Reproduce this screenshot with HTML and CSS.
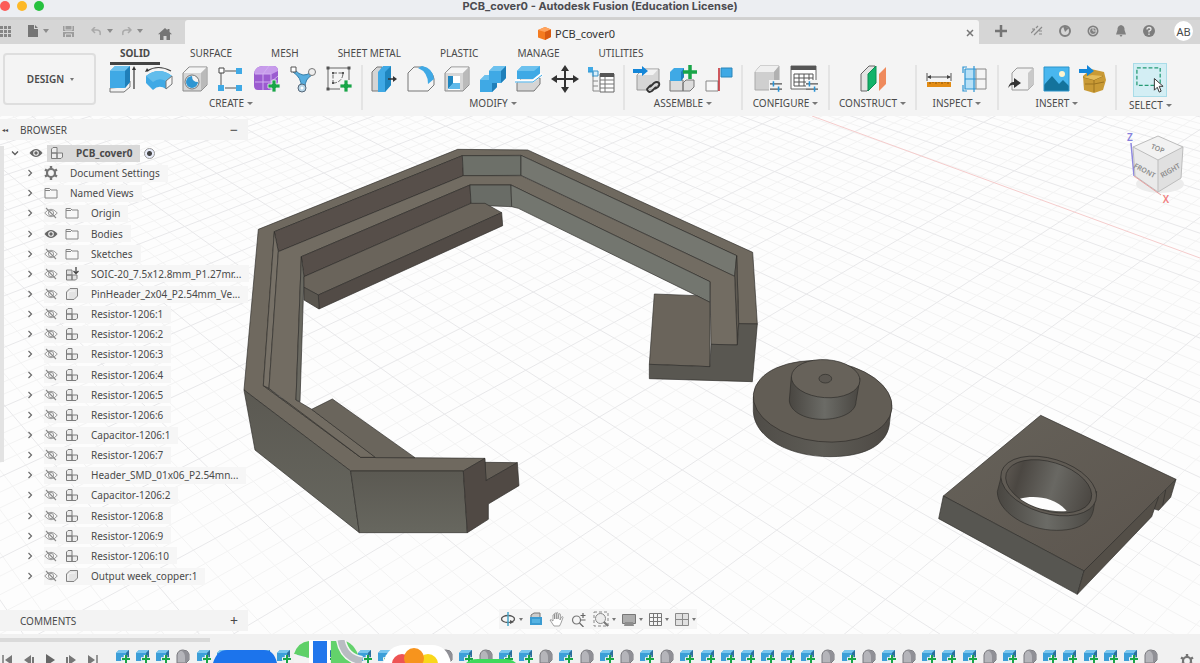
FILE: index.html
```html
<!DOCTYPE html>
<html lang="en">
<head>
<meta charset="utf-8">
<title>PCB_cover0 - Autodesk Fusion (Education License)</title>
<link rel="stylesheet" href="styles.css">
</head>
<body>
<svg class="defs" aria-hidden="true">
  <defs>
    <linearGradient id="greyG" x1="0" y1="0" x2="1" y2="1"><stop offset="0" stop-color="#f4f4f4"/><stop offset="1" stop-color="#c9c9c9"/></linearGradient>
    <symbol id="plus" viewBox="0 0 14 14"><path d="M5 1h4v4h4v4H9v4H5V9H1V5h4z" fill="#19a548" stroke="#f3f3f3" stroke-width=".8"/></symbol>
    <symbol id="cube" viewBox="0 0 28 28"><path d="M2 8l6-6h18v18l-6 6H2z" fill="#d6d6d6" stroke="#8b8b8b"/><path d="M2.500 8l6-5.500h17L20 8z" fill="#f5f5f5"/><path d="M20 8l5.500-5.500V20L20 25.500z" fill="#bababa"/></symbol>
    <symbol id="sliders" viewBox="0 0 14 12"><path d="M0 3h14M0 9h14" stroke="#555" stroke-width="1.500"/><path d="M4 0v6M10 6v6" stroke="#2793d6" stroke-width="1.800"/></symbol>
    <symbol id="chev" viewBox="0 0 8 8"><path d="M2.500 1l3 3-3 3" fill="none" stroke="#6a6a6a" stroke-width="1.200"/></symbol>
    <symbol id="chevdown" viewBox="0 0 8 8"><path d="M1 2.500l3 3 3-3" fill="none" stroke="#5a5a5a" stroke-width="1.300"/></symbol>
    <symbol id="eye" viewBox="0 0 14 12"><path d="M.5 6Q7-2 13.500 6 7 14 .5 6z" fill="#666"/><circle cx="7" cy="6" r="2.800" fill="#f2f2f2"/><circle cx="7" cy="6" r="1.700" fill="#666"/></symbol>
    <symbol id="eyeoff" viewBox="0 0 14 12"><path d="M.7 6Q7-1.500 13.300 6 7 13.500 .7 6z" fill="none" stroke="#9a9a9a"/><circle cx="7" cy="6" r="2.600" fill="none" stroke="#9a9a9a"/><path d="M2 1l10 10" stroke="#8a8a8a" stroke-width="1.100"/></symbol>
    <symbol id="folder" viewBox="0 0 14 12"><path d="M1 11V1.500h4.500L7 3h6v8z" fill="#f7f7f7" stroke="#848484"/><path d="M1 3.500h5" stroke="#848484"/></symbol>
    <symbol id="comp" viewBox="0 0 14 14"><path d="M1.500 7V3L3 1.500h4V7zM1.500 7H7v5.500H1.500zM7 7h5.500v4L11 12.500H7z" fill="#ececec" stroke="#7c7c7c"/></symbol>
    <symbol id="complink" viewBox="0 0 14 14"><path d="M1.500 3H7v5H1.500zM1.500 8H7v5H1.500zM7 8h5v3.500L10.500 13H7z" fill="#e0e0e0" stroke="#7c7c7c"/><path d="M11 0v6M8.500 4L11 6.500 13.500 4" fill="none" stroke="#444" stroke-width="1.300"/></symbol>
    <symbol id="body" viewBox="0 0 14 14"><path d="M1.500 12.500V5L5 1.500h7.500V9L9 12.500z" fill="#e3e3e3" stroke="#848484" stroke-linejoin="round"/><path d="M3 11V6q1-2 4-2h3" fill="none" stroke="#f8f8f8"/></symbol>
    <symbol id="gear" viewBox="0 0 14 14"><circle cx="7" cy="7" r="4" fill="none" stroke="#747474" stroke-width="2.200"/><path d="M7 0v3M7 11v3M1 3.500l2.500 1.500M10.500 9l2.500 1.500M1 10.500L3.500 9M10.500 5L13 3.500" stroke="#747474" stroke-width="2.400"/></symbol>
    <symbol id="tl-extrude" viewBox="0 0 14 14"><path d="M0 4l3-3h10v7l-3 4H0z" fill="#3c9fd8"/><path d="M0 4l3-3h10l-3 3z" fill="#79c5ee"/><path d="M10 4l3-3v7l-3 4z" fill="#2a6f9c"/><path d="M5 10h9M9.500 6v8" stroke="#f3f3f3" stroke-width="3.500"/><path d="M6 10h8M10 6v8" stroke="#19a548" stroke-width="2"/></symbol>
    <symbol id="tl-body" viewBox="0 0 14 14"><path d="M1 14V6q1-5 6-5 5 0 6 4v6l-3 3z" fill="#b5b5ba" stroke="#77777c"/><path d="M9 14V8q0-4-3-6 6-1 7 4v5z" fill="#909096"/></symbol>
  </defs>
</svg>
<div class="app">
  <header class="titlebar">
    <span class="lights"><i class="light red"></i><i class="light amber"></i><i class="light green"></i></span>
    <h1>PCB_cover0 - Autodesk Fusion (Education License)</h1>
  </header>

  <nav class="tabbar">
    <div class="quick">
      <button aria-label="Data panel"><svg width="11" height="11"><path d="M0 0h3v3H0zM4 0h3v3H4zM8 0h3v3H8zM0 4h3v3H0zM4 4h3v3H4zM8 4h3v3H8zM0 8h3v3H0zM4 8h3v3H4zM8 8h3v3H8z" fill="#858585"/></svg></button>
      <button class="q-file" aria-label="File"><svg width="10" height="12"><path d="M0 0h6v4h4v8H0zM7 0l3 3H7z" fill="#757575"/></svg><i class="caret"></i></button>
      <button class="q-save" aria-label="Save"><svg width="11" height="11"><path d="M0 0h11v11H0z" fill="#9d9d9d"/><path d="M2 0v4h7V0M0 5.500h11M2.500 11V8h6v3" fill="none" stroke="#d6d6d6"/></svg></button>
      <button class="q-undo" aria-label="Undo"><svg width="11" height="9"><path d="M4 0L1 3l3 3M1 3h5q4 0 3 5" fill="none" stroke="#a9a9a9" stroke-width="1.500"/></svg><i class="caret"></i></button>
      <button class="q-redo" aria-label="Redo"><svg width="11" height="9"><path d="M7 0l3 3-3 3M10 3H5Q1 3 2 8" fill="none" stroke="#a9a9a9" stroke-width="1.500"/></svg><i class="caret"></i></button>
      <button class="q-home" aria-label="Home"><svg width="14" height="12"><path d="M7 0l2.500 2.200V1h2v3L14 6.300h-2V12H8.500V8h-3v4H2V6.300H0z" fill="#757575"/></svg></button>
    </div>
    <div class="doctab">
      <span class="doc"><svg width="13" height="13"><path d="M0 3l7-3 6 2.500V10l-6 3-7-2.500z" fill="#f47b20"/><path d="M0 3l7-3 6 2.500L7 5z" fill="#ffa45e"/><path d="M7 5l6-2.500V10l-6 3z" fill="#d85b12"/></svg>PCB_cover0</span>
      <button class="close" aria-label="Close tab"><svg width="8" height="8"><path d="M1 1l6 6M7 1L1 7" stroke="#777" stroke-width="1.500"/></svg></button>
    </div>
    <div class="status">
      <button aria-label="New design"><svg width="12" height="12"><path d="M6 0v12M0 6h12" stroke="#757575" stroke-width="2.500"/></svg></button>
      <button aria-label="Extensions"><svg width="12" height="12"><path d="M0 8l4-4M3 10l8-8M5 3l2-2M8 9h3M1 4h3M8 6h3" stroke="#8a8a8a" stroke-width="1.200"/></svg></button>
      <button aria-label="Online status"><svg width="12" height="12"><circle cx="6" cy="6" r="5" fill="none" stroke="#808080" stroke-width="2"/><path d="M4 1l2 6 4-4z" fill="#808080"/></svg></button>
      <button aria-label="Job status"><svg width="12" height="12"><circle cx="6" cy="6" r="5.500" fill="#808080"/><circle cx="6" cy="6" r="3.500" fill="none" stroke="#d6d6d6"/><path d="M6 3v3h3" fill="none" stroke="#d6d6d6"/></svg></button>
      <button aria-label="Notifications"><svg width="12" height="12"><path d="M6 0q4 1 3.500 5L11 9.500H1L2.500 5Q2 1 6 0zM4.500 10h3L6 12z" fill="#808080"/></svg></button>
      <button aria-label="Help"><svg width="12" height="12"><circle cx="6" cy="6" r="6" fill="#7d7d7d"/><path d="M4 4.500q0-2 2-2t2 1.700Q8 5.500 6 6v1.500M6 8.500V10" fill="none" stroke="#e5e5e5" stroke-width="1.300"/></svg></button>
      <button class="avatar">AB</button>
    </div>
  </nav>

  <section class="ribbon">
    <button class="workspace">DESIGN<i class="caret"></i></button>
    <div class="panels">
      <div class="modes">
        <button class="active">SOLID</button><button>SURFACE</button><button>MESH</button><button>SHEET METAL</button><button>PLASTIC</button><button>MANAGE</button><button>UTILITIES</button>
      </div>
      <div class="groups">
        <div class="group">
          <div class="tools">
            <button aria-label="Extrude"><svg viewBox="0 0 28 28"><path d="M1 25V23l14-1 6-6v6l-6 5H1z" fill="#f2f2f2" stroke="#777"/><path d="M1 6l5-5h15v16l-5 6H1z" fill="#3fa9e5"/><path d="M1 6l5-5h15l-5 5z" fill="#6cc1ee"/><path d="M16 6l5-5v16l-5 6z" fill="#1f7fb9"/><path d="M25 24V4" stroke="#444" stroke-width="1.300"/><path d="M25 1l2 4h-4z" fill="#333"/></svg></button>
            <button aria-label="Revolve"><svg viewBox="0 0 28 28"><path d="M2 6Q13-1 26 6" fill="none" stroke="#444" stroke-width="1.200"/><path d="M0 7l2-4 2 3z" fill="#333"/><path d="M1 11Q14 1 27 11v8l-6 5q-7-5-13 1l-7-7z" fill="#3fa9e5"/><path d="M1 11Q14 1 27 11l-6 5q-7-4-13 1z" fill="#62bdec"/><path d="M21 16l6-5v8l-6 5z" fill="#f5f5f5" stroke="#777"/></svg></button>
            <button aria-label="Hole"><svg viewBox="0 0 28 28"><use href="#cube"/><circle cx="11" cy="17" r="7" fill="#f4f4f4" stroke="#777"/><path d="M11 11a6 6 0 1 0 6 6q-6 0-6-6z" fill="#2f96d2"/></svg></button>
            <button aria-label="Rectangular pattern"><svg viewBox="0 0 28 28"><path d="M4 7v13M8 6h12M8 23h12" stroke="#555"/><path d="M2 3h5v5H2z" fill="#fff" stroke="#444"/><path d="M19 3h6v6h-6zM1 20h6v6H1zM19 20h6v6h-6z" fill="#3fa9e5"/></svg></button>
            <button aria-label="Create form"><svg viewBox="0 0 28 28"><path d="M1 8q2-7 9-7h10q5 0 5 5v11q-2 8-9 8H5q-4 0-4-4z" fill="#9b5bd0"/><path d="M1 8q2-7 9-7h10q5 0 5 5l-6 3H2z" fill="#c79beb"/><path d="M2 9h16v16M10 9v16M2 17h16l7-6M10 9l6-8" fill="none" stroke="#d0aef0"/><use href="#plus" x="14" y="14" width="14" height="14"/></svg></button>
            <button aria-label="Automated modeling"><svg viewBox="0 0 28 28"><path d="M6 5q8 9 16 2l1 3q-7 4-7 12h-4Q13 13 4 7z" fill="#58aedf" stroke="#377fa9"/><path d="M2 2h5v5H2z" fill="#fff" stroke="#555"/><circle cx="23" cy="7" r="3.500" fill="#eee" stroke="#777"/><circle cx="13" cy="23" r="4" fill="#b7d6e8" stroke="#567"/><circle cx="13" cy="23" r="1.500" fill="#fff"/></svg></button>
            <button aria-label="Create sketch"><svg viewBox="0 0 28 28"><path d="M3 3h21v12M3 3v21h12" fill="none" stroke="#666"/><path d="M8 19V8h11M18 9q-1 8-9 9" fill="none" stroke="#666" stroke-dasharray="4 1.500"/><path d="M1.500 1.500h3v3h-3zM22.500 1.500h3v3h-3zM1.500 22.500h3v3h-3zM7 7h2v2H7zM17 7h2v2h-2zM7 17h2v2H7z" fill="#555"/><use href="#plus" x="14" y="14" width="14" height="14"/></svg></button>
          </div>
          <button class="group-name">CREATE<i class="caret"></i></button>
        </div>
        <div class="group">
          <div class="tools">
            <button aria-label="Press pull"><svg viewBox="0 0 28 28"><path d="M1 7l5-5h5v24H1z" fill="#d5d5d5" stroke="#777"/><path d="M7 7l5-6h8v19l-6 7H7z" fill="#3fa9e5"/><path d="M14 7l6-6v19l-6 7z" fill="#1f86c0"/><path d="M17 14h6" stroke="#333" stroke-width="1.500"/><path d="M22 11l4 3-4 3z" fill="#333"/></svg></button>
            <button aria-label="Fillet"><svg viewBox="0 0 28 28"><path d="M1 8l6-6h9q10 4 11 12v6l-6 6H1z" fill="url(#greyG)" stroke="#777"/><path d="M11 3l4-2q11 2 12 13l-6 5Q21 7 11 3z" fill="#3fa9e5"/></svg></button>
            <button aria-label="Shell"><svg viewBox="0 0 28 28"><use href="#cube"/><path d="M5 11h12v14H5z" fill="#fff"/><path d="M5 11h5v8l-5 5z" fill="#1f86c0"/><path d="M5 24l5-6h7v6z" fill="#5fb9ea"/></svg></button>
            <button aria-label="Combine"><svg viewBox="0 0 28 28"><path d="M1 15l5-5h4V6l5-5h12v12l-5 5h-4v4l-5 5H1z" fill="#3fa9e5"/><path d="M1 15l5-5h4v5zM10 6l5-5h12l-5 5z" fill="#6cc1ee"/><path d="M22 6l5-5v12l-5 5zM13 18h5v4l-5 5z" fill="#1f7fb9"/></svg></button>
            <button aria-label="Split body"><svg viewBox="0 0 28 28"><path d="M2 18l5-5h18v6l-6 7H2z" fill="#d5d5d5" stroke="#777"/><path d="M2 6l5-5h18v8l-6 5H2z" fill="#3fa9e5"/><path d="M2 6l5-5h18l-6 5z" fill="#6cc1ee"/><path d="M0 16h18l9-7" fill="none" stroke="#fff" stroke-width="3"/><path d="M0 17h18l9-7" fill="none" stroke="#3fa9e5"/></svg></button>
            <button aria-label="Move"><svg viewBox="0 0 28 28"><path d="M14 4v20M4 14h20" stroke="#333" stroke-width="2"/><path d="M14 0l4 6h-8zM14 28l4-6h-8zM0 14l6-4v8zM28 14l-6-4v8z" fill="#333"/></svg></button>
            <button aria-label="Parameters"><svg viewBox="0 0 28 28"><path d="M1 2h5v5H1z" fill="#3fa9e5"/><path d="M6 6h5v5H6zM1 7h5v5" fill="#d8eefa" stroke="#3b94ca"/><path d="M6 11v15h6M6 16h5M6 21h5" fill="none" stroke="#888"/><path d="M13 9h14v18H13z" fill="#fff" stroke="#666"/><path d="M13 8h14v4H13z" fill="#555"/><path d="M13 15h14M13 19h14M13 23h14M18 12v15" stroke="#777"/></svg></button>
          </div>
          <button class="group-name">MODIFY<i class="caret"></i></button>
        </div>
        <div class="group">
          <div class="tools">
            <button aria-label="Insert component"><svg viewBox="0 0 28 28"><path d="M4 10l6-6h16v15l-6 6H4z" fill="#d6d6d6" stroke="#999"/><path d="M4.500 10l6-5.500H25L20 10z" fill="#f2f2f2"/><path d="M0 4h9V1l6 5-6 5V8H0z" fill="#1486d8"/><path d="M17 22l4-4q3-2 5 0 1 2-1 4l-3 2M23 22l-4 4q-3 2-4 0-2-2 0-3l3-3" fill="none" stroke="#333" stroke-width="1.800"/></svg></button>
            <button aria-label="New component"><svg viewBox="0 0 28 28"><path d="M1 15h13v11H1zM14 18l3-3h8v7l-4 4h-7z" fill="#ddd" stroke="#777"/><path d="M1 7l4-4h10v9l-3 4H1z" fill="#3fa9e5"/><path d="M12 7l3-4v9l-3 4z" fill="#1f7fb9"/><path d="M21 0v14M14 7h14" stroke="#19a548" stroke-width="3.500"/></svg></button>
            <button aria-label="Joint"><svg viewBox="0 0 28 28"><path d="M1 16h12v10H1z" fill="#f8f8f8" stroke="#888"/><path d="M16 3h11v9H16z" fill="#3fa9e5" stroke="#2b86ba"/><path d="M14 3v23" stroke="#c2252c" stroke-width="1.500"/></svg></button>
          </div>
          <button class="group-name">ASSEMBLE<i class="caret"></i></button>
        </div>
        <div class="group narrow">
          <div class="tools">
            <button aria-label="Configure"><svg viewBox="0 0 28 28"><path d="M1 7l5-6h19v18l-5 6H1z" fill="#cfcfcf" stroke="#aaa"/><path d="M1 7l5-6h19l-5 6z" fill="#efefef"/><path d="M20 7l5-6v18l-5 6z" fill="#b1b1b1"/><path d="M15 15h13v13H15z" fill="#f3f3f3"/><use href="#sliders" x="16" y="16" width="12" height="11"/></svg></button>
            <button aria-label="Configuration table"><svg viewBox="0 0 28 28"><path d="M1 1h25v23H1z" fill="#fff" stroke="#666"/><path d="M1 1h25v4H1z" fill="#555"/><path d="M4 9h19v12H4zM4 13h19M4 17h19M9 9v12M14 9v12M19 9v12" fill="none" stroke="#555"/><path d="M16 15h12v13H16z" fill="#f3f3f3"/><use href="#sliders" x="16" y="16" width="12" height="11"/></svg></button>
          </div>
          <button class="group-name">CONFIGURE<i class="caret"></i></button>
        </div>
        <div class="group narrow">
          <div class="tools">
            <button aria-label="Offset plane"><svg viewBox="0 0 28 28"><path d="M2 9l8-8h6v17l-8 8H2z" fill="#e4e4e4" stroke="#666"/><path d="M9 9l8-8v17l-8 8z" fill="#12b36a" stroke="#0d8d52"/><path d="M20 9l7-7v17l-7 7z" fill="#ef8a5c"/></svg></button>
          </div>
          <button class="group-name">CONSTRUCT<i class="caret"></i></button>
        </div>
        <div class="group">
          <div class="tools">
            <button aria-label="Measure"><svg viewBox="0 0 28 28"><path d="M2 8v8M26 8v8M3 12h22" stroke="#555"/><path d="M2 12l4-2v4zM26 12l-4-2v4z" fill="#444"/><path d="M2 17h24v5H2z" fill="#e38c14"/><path d="M5 17v2M8 17v1M11 17v2M14 17v1M17 17v2M20 17v1M23 17v2" stroke="#8d560b"/></svg></button>
            <button aria-label="Interference"><svg viewBox="0 0 28 28"><path d="M4 4h11v20H4z" fill="#b7e0f7"/><path d="M15 4h10v20H15zM15 14h10" fill="none" stroke="#888"/><path d="M6 2H2v6M2 20v6h4M13 1v26M4 4h11M4 4v20h11M4 14h11" fill="none" stroke="#2d93d1" stroke-width="1.200"/></svg></button>
          </div>
          <button class="group-name">INSPECT<i class="caret"></i></button>
        </div>
        <div class="group">
          <div class="tools">
            <button aria-label="Derive"><svg viewBox="0 0 28 28"><path d="M5 8l5-5h16v17l-5 5H5z" fill="#f1f1f1" stroke="#999"/><path d="M21 8l5-5v17l-5 5z" fill="#c9c9c9"/><path d="M1 23q2-7 6-6v-4l7 5-7 5v-3q-3-1-6 3z" fill="#333"/></svg></button>
            <button aria-label="Canvas"><svg viewBox="0 0 28 28"><path d="M1 2h25v24H1z" fill="#49b7ef"/><circle cx="19" cy="9" r="3" fill="#fff5cf"/><path d="M1 20l8-9 7 8 4-4 6 6v5H1z" fill="#14739c"/><path d="M1 2h25v24H1z" fill="none" stroke="#2a94cb"/></svg></button>
            <button aria-label="Insert McMaster part"><svg viewBox="0 0 28 28"><path d="M4 11l8-7 13 3 2 8-3 10-9 3-10-3z" fill="#c99a35"/><path d="M4 12l11 3 9-4M15 15v12M6 19h9l10-2" fill="none" stroke="#9d7420"/><path d="M4 12l9-2 11 1-9 4z" fill="#e5bd5b"/><path d="M0 4h8V0l7 6-7 5V8H0z" fill="#1486d8"/></svg></button>
          </div>
          <button class="group-name">INSERT<i class="caret"></i></button>
        </div>
        <div class="group last">
          <div class="tools">
            <button class="selected" aria-label="Select"><svg viewBox="0 0 33 33"><path d="M3 4h24v18H3z" fill="none" stroke="#259a74" stroke-width="1.300" stroke-dasharray="4 2"/><path d="M21 15v12l3-3 2 5 2-1-2-5h4z" fill="#fff" stroke="#333"/></svg></button>
          </div>
          <button class="group-name">SELECT<i class="caret"></i></button>
        </div>
      </div>
    </div>
  </section>

  <main class="viewport">
    <svg class="scene" viewBox="0 116 1200 518" preserveAspectRatio="xMidYMid slice" role="img" aria-label="Model view">
      <defs>
        <linearGradient id="bossG"><stop offset="0" stop-color="#494641"/><stop offset=".5" stop-color="#6b6b66"/><stop offset="1" stop-color="#494641"/></linearGradient>
        <linearGradient id="holeG"><stop offset="0" stop-color="#5a554f"/><stop offset=".15" stop-color="#4b4742"/><stop offset=".55" stop-color="#696863"/><stop offset="1" stop-color="#4b4742"/></linearGradient>
        <linearGradient id="discG"><stop offset="0" stop-color="#4f4c47"/><stop offset=".5" stop-color="#5e5c56"/><stop offset="1" stop-color="#4c4843"/></linearGradient>
        <linearGradient id="wallG" x1="0" y1="0" x2="0" y2="1"><stop offset="0" stop-color="#5b5952"/><stop offset="1" stop-color="#67675f"/></linearGradient>
        <linearGradient id="topG" x1="0" y1="0" x2="1" y2="1"><stop offset="0" stop-color="#66625a"/><stop offset="1" stop-color="#5b544d"/></linearGradient>
      </defs>
      <path id="grid-minor" class="minor"/>
      <path id="grid-major" class="major"/>
      <path d="M812 116L1200 258" stroke="#f5cccc" fill="none"/>
      <g class="solid" transform="translate(230 140) scale(.33333)">
        <path d="M42 750L85 268 683 28 893 30 1568 337 1582 552 1526 551 1520 347 873 46 697 47 133 275 100 737 392 952 765 955 700 993 362 993z" fill="#6f695f"/>
        <path d="M100 737L117 745 150 772 437 952H392z" fill="#6f695f"/>
        <path d="M133 275L697 47 700 107 145 335z" fill="#574f4a"/>
        <path d="M697 47H873V106L700 107z" fill="#6d7069"/>
        <path d="M873 46L1520 347 1514 409 873 106z" fill="#757770"/>
        <path d="M133 275L145 335 117 745 100 737z" fill="#777167"/>
        <path d="M1520 347L1526 551 1522 615 1514 409z" fill="#5f5a52"/>
        <path d="M145 335L700 107H873L1514 409 1522 615 1443 613 1440 425 843 135H720L214 350 198 780 245 808 437 952H392L117 745z" fill="#726c62"/>
        <path d="M214 350L720 135 723 190 222 410z" fill="#564e49"/>
        <path d="M720 135H843L845 200 765 197 723 190z" fill="#696c66"/>
        <path d="M843 135L1440 425V487L1400 467 865 205 845 200z" fill="#73766f"/>
        <path d="M214 350L222 410 210 785 198 780z" fill="#696860"/>
        <path d="M222 410L723 190H765L815 218 265 465 222 442z" fill="#6a645b"/>
        <path d="M265 465L815 218 818 257 267 507z" fill="#524b46"/>
        <path d="M222 442L265 465 267 507 222 480z" fill="#5a564f"/>
        <path d="M245 808L307 777 555 953H437z" fill="#6a655c"/>
        <path d="M42 750L362 993 388 1178 75 930z" fill="url(#wallG)"/>
        <path d="M362 993H700L712 1178H388z" fill="url(#wallG)"/>
        <path d="M765 967L862 968 768 1022z" fill="#645e56"/>
        <path d="M700 993L765 955 768 1022 862 968 867 1037 775 1092V1138L712 1178z" fill="#504944"/>
        <path d="M1273 462L1400 467 1440 487V680L1258 673z" fill="#6a645b"/>
        <path d="M1258 673L1440 680 1443 613 1522 615 1526 551 1582 552 1567 725 1258 716z" fill="#595751"/>
      </g>
      <g class="solid" transform="translate(480 140) scale(.33333)">
        <path d="M820 770V815C824 895 930 950 1050 950S1226 905 1229 845L1235 795z" fill="url(#discG)"/>
        <ellipse cx="1028" cy="784" rx="209" ry="121" transform="rotate(6 1028 784)" fill="#625d55"/>
        <path d="M934 710L928 780C928 812 970 838 1027 838S1128 816 1128 785L1140 715z" fill="url(#bossG)"/>
        <ellipse cx="1037" cy="716" rx="103" ry="57" transform="rotate(4 1037 716)" fill="#67625a"/>
        <ellipse cx="1036" cy="716" rx="19" ry="13" fill="#5b5751"/>
      </g>
      <g class="solid" transform="translate(920 400) scale(.33333)">
        <path d="M362 46L768 238 492 513 70 288z" fill="url(#topG)"/>
        <path d="M70 288L492 513 472 583 56 356z" fill="#575651"/>
        <path d="M492 513L716 290 768 238 752 292 716 331 703 327 695 350 472 583z" fill="#544f48"/>
        <path d="M716 290L703 327M737 270L728 316" fill="none"/>
        <path d="M245 225L232 275C232 335 320 391 410 391S518 350 521 325L530 275z" fill="url(#bossG)"/>
        <ellipse cx="386" cy="258" rx="148" ry="82" transform="rotate(17 386 258)" fill="#605b54"/>
        <ellipse cx="386" cy="259" rx="133" ry="73" transform="rotate(17 386 259)" fill="url(#holeG)"/>
        <path d="M300 296C340 285 405 290 440 333 380 337 330 318 300 296z" fill="#fdfdfd" stroke="none"/>
      </g>
      <g class="viewcube">
        <ellipse cx="1160" cy="184" rx="24" ry="9" fill="#ececec"/>
        <path d="M1131 143L1134 176" stroke="#8d87e0" stroke-width="1.500"/>
        <path d="M1133 147L1158 136 1183 147 1158 160z" fill="#f2f2f2"/>
        <path d="M1133 147L1158 160V192L1135 176z" fill="#eaeaea"/>
        <path d="M1158 160L1183 147 1181 178 1158 192z" fill="#e0e0e0"/>
        <path d="M1133 147L1158 136 1183 147 1181 178 1158 192 1135 176zM1133 147L1158 160 1183 147M1158 160V192" fill="none" stroke="#bdbdbd"/>
        <path d="M1134 176L1161 195" stroke="#e9a0a0"/>
        <text x="1158" y="151" transform="rotate(22 1158 148)">TOP</text>
        <text x="1145" y="173" transform="rotate(28 1145 170)">FRONT</text>
        <text x="1170" y="173" transform="rotate(-30 1170 170)">RIGHT</text>
        <text class="axis" x="1130" y="141">Z</text>
        <text class="axis" x="1166" y="203">X</text>
      </g>
    </svg>

    <aside class="browser">
      <header class="bar"><span class="collapse">◂◂</span><h2>BROWSER</h2><button aria-label="Minimise browser">−</button></header>
      <ul class="tree" id="tree"></ul>
      <footer class="bar"><span class="collapse"></span><h2>COMMENTS</h2><button aria-label="Add comment">+</button></footer>
    </aside>

    <div class="navbar">
      <button aria-label="Orbit"><svg width="16" height="14"><ellipse cx="8" cy="7" rx="6.500" ry="3.500" fill="none" stroke="#555" stroke-width="1.300"/><path d="M8 0v14" stroke="#46a5c9" stroke-width="1.500"/><path d="M10 8l4 2-4 2z" fill="#555"/></svg><i class="caret"></i></button>
      <button aria-label="Look at"><svg width="14" height="14"><path d="M2 6V3l3-2h6v5" fill="#ccc" stroke="#777"/><path d="M1 5h12v8H1z" fill="#3b9bd1"/><path d="M3 7h8v4H3z" fill="#55b2e2"/></svg></button>
      <button aria-label="Pan"><svg width="16" height="15"><path d="M5 14L1 8q1-1 3 1V3q1-1 1.500 0v4V1.500q1-1 1.800 0V7 1q1-1 1.700 0v6l1-5q1-1 1.500.5L11 8l1.500-3q1.500-1 1.500.5L12 11l-1.500 3z" fill="#fff" stroke="#8a8a8a" stroke-width=".8"/></svg></button>
      <button aria-label="Zoom"><svg width="16" height="15"><circle cx="5.500" cy="8" r="4" fill="none" stroke="#777" stroke-width="1.200"/><path d="M8.500 11l4 4M12 1v5M9.500 3.500h5M9.500 8h5" stroke="#666" stroke-width="1.200"/></svg></button>
      <button aria-label="Fit"><svg width="16" height="16"><path d="M1 1h14v14H1z" fill="none" stroke="#888" stroke-dasharray="3 2"/><circle cx="7.500" cy="7.500" r="5" fill="#ececec" stroke="#888"/><path d="M11 11l4 4" stroke="#777" stroke-width="2"/></svg><i class="caret"></i></button>
      <button aria-label="Display settings"><svg width="14" height="13"><path d="M.5 1.500h13v9H.5z" fill="#adadad" stroke="#777"/><path d="M3 9h8l1 4H2z" fill="#8e8e8e"/></svg><i class="caret"></i></button>
      <button aria-label="Grid settings"><svg width="13" height="13"><path d="M.5.5h12v12H.5zM4.500 0v13M8.500 0v13M0 4.500h13M0 8.500h13" fill="none" stroke="#777"/></svg><i class="caret"></i></button>
      <button aria-label="Viewports"><svg width="14" height="13"><path d="M.5.5h13v12H.5zM7.500 0v13M0 6.500h14" fill="#e1e1e1" stroke="#8a8a8a"/></svg><i class="caret"></i></button>
    </div>
  </main>

  <footer class="timeline">
    <div class="scrollbar"></div>
    <div class="track">
      <div class="transport">
        <button aria-label="Go to start"><svg width="12" height="12"><path d="M1 1v10" stroke="#777" stroke-width="1.500"/><path d="M10 1v10L3 6z" fill="#777"/></svg></button>
        <button aria-label="Step back"><svg width="12" height="12"><path d="M8 1v10L1 6zM9 3h2v8H9z" fill="#777"/></svg></button>
        <button aria-label="Play"><svg width="12" height="12"><path d="M2 0v12l9-6z" fill="#666"/></svg></button>
        <button aria-label="Step forward"><svg width="12" height="12"><path d="M4 1v10l7-5zM1 3h2v8H1z" fill="#777"/></svg></button>
        <button aria-label="Go to end"><svg width="12" height="12"><path d="M11 1v10" stroke="#777" stroke-width="1.500"/><path d="M2 1v10l7-5z" fill="#777"/></svg></button>
      </div>
      <div class="features" id="features"></div>
      <button class="settings" aria-label="Timeline settings"><svg width="14" height="14"><use href="#gear"/></svg></button>
    </div>
    <svg class="dock" width="310" height="23" aria-hidden="true">
      <path d="M3 23Q7 10 17 10H54Q64 10 67 23z" fill="#1c74ec"/>
      <path d="M84 14Q88 2 99 1V18z" fill="#5fd068"/><path d="M84 14L99 18V23H84z" fill="#f3f3f3"/>
      <path d="M99 0h21v23H99z" fill="#fff"/><path d="M103 1h14v22H103z" fill="#2277ec"/>
      <path d="M121 1h14Q146 4 151 23H121z" fill="#63d26b"/><path d="M131 0Q134 18 152 21" fill="none" stroke="#f5f5f5" stroke-width="10"/><path d="M131 0Q134 18 152 21" fill="none" stroke="#b9bcc2" stroke-width="7"/>
      <path d="M173 23Q178 5 194 5H222Q237 5 241 23z" fill="#fff"/>
      <circle cx="192" cy="24" r="10" fill="#ee5454"/><circle cx="218" cy="24" r="10" fill="#f9d71c"/><circle cx="204" cy="18" r="10" fill="#f7941d"/>
      <path d="M256 23Q260 19 268 19H294Q302 19 306 23z" fill="#3fd95c"/>
    </svg>
  </footer>
</div>
<script src="app.js"></script>
</body>
</html>
```

FILE: styles.css
```css
* { box-sizing: border-box; }
body {
  margin: 0;
  font-family: "Noto Sans", "Open Sans", sans-serif;
  font-size: 10px;
  color: #4a4a4a;
}
button {
  border: 0;
  padding: 0;
  margin: 0;
  background: none;
  font: inherit;
  color: inherit;
  display: flex;
  align-items: center;
  justify-content: center;
}
h1, h2, ul { margin: 0; padding: 0; font: inherit; }
.defs { display: none; }
svg { display: block; flex: none; }
.caret {
  border: 3px solid transparent;
  border-top: 4px solid #777;
  border-bottom: 0;
  flex: none;
}
.app { height: 100vh; display: flex; flex-direction: column; overflow: hidden; }

.titlebar {
  height: 18px;
  flex: none;
  background: #eceef2;
  border-bottom: 1px solid #d2d2d2;
  display: grid;
  grid-template-columns: 1fr auto 1fr;
  padding-bottom: 6px;
  align-items: center;
}
.titlebar h1 { font: 700 11px/12px Inter, sans-serif; color: #4b4b50; }
.lights { display: flex; gap: 7px; }
.light { width: 10px; height: 10px; border-radius: 50%; }
.red { background: #fc5b57; }
.amber { background: #fdb827; }
.green { background: #27c13f; }

.tabbar { height: 26px; flex: none; display: flex; background: #d6d6d6; border-top: 2px solid #d0d0d0; }
.quick { width: 185px; flex: none; display: flex; align-items: center; padding-bottom: 2px; }
.quick button { gap: 5px; }
.quick .caret { border-top-color: #8c8c8c; }
.q-file { margin-left: 17px; }
.q-save { margin-left: 14px; }
.q-undo { margin-left: 17px; }
.q-redo { margin-left: 8px; }
.q-home { margin-left: 15px; padding-top: 6px; }
.doctab {
  flex: 1;
  background: #f4f4f4;
  border-radius: 3px 3px 0 0;
  display: flex;
  align-items: center;
  padding-right: 5px;
}
.doc { flex: 1; display: flex; gap: 4px; justify-content: center; align-items: center; font-size: 11px; color: #333; padding: 3px 0 0 3px; }
.doctab .close { width: 9px; padding-top: 2px; }
.status { width: 221px; flex: none; display: flex; align-items: center; padding: 0 7px 2px 16px; gap: 16px; }
.status .avatar { width: 20px; height: 20px; border-radius: 50%; background: #fff; font-size: 11px; margin-left: 3px; }
.status button:nth-child(2) { margin-left: 8px; }

.ribbon { height: 72px; flex: none; background: #f4f4f4; display: flex; }
.workspace {
  width: 93px;
  height: 52px;
  margin: 9px 5px 0 3px;
  border: 2px solid #dedede;
  border-radius: 4px;
  flex: none;
  gap: 6px;
  padding-left: 2px;
  font-weight: 600;
}
.workspace .caret { border-width: 3px 2px 0; }
.panels { flex: 1; }
.modes { display: flex; height: 21px; gap: 31px; padding-left: 9px; }
.modes button { padding: 0 4px; border-bottom: 3px solid transparent; }
.modes .active { width: 50px; margin-right: -5px; font-weight: 700; border-bottom-color: #444; }
.groups { display: flex; }
.group { padding: 0 8px; border-right: 2px solid #e4e4e4; height: 45px; display: flex; flex-direction: column; align-items: center; }
.group.narrow { min-width: 87px; }
.group.last { border: 0; padding: 0 12px; }
.tools { display: flex; gap: 8px; height: 30px; align-items: center; }
.tools svg { width: 28px; height: 28px; }
.tools .selected { background: #d3eef4; border: 1px solid #a9dce8; margin: 0 4px; }
.tools .selected svg { width: 32px; height: 32px; }
.group-name { gap: 3px; height: 20px; flex: none; white-space: nowrap; }
.group-name .caret { border-width: 3px 3px 0; }

.viewport { flex: 1; min-height: 0; position: relative; background: #fdfdfd; }
.scene { position: absolute; inset: 0; width: 100%; height: 100%; }
.minor { fill: none; stroke: #f3f3f3; }
.major { fill: none; stroke: #e8e8ea; }
.solid { stroke: #2f2d2a; stroke-width: 2; stroke-linejoin: round; }
.viewcube text { font-size: 7px; text-anchor: middle; fill: #8c8c8c; font-weight: 600; }
.viewcube .axis { font-size: 10px; fill: #8580dc; }
.viewcube .axis:last-child { fill: #f07f7f; }

.browser { position: relative; width: 248px; height: 100%; padding: 3px 0; display: flex; flex-direction: column; }
.bar { height: 21px; flex: none; background: #f3f3f3; display: flex; align-items: center; }
.bar h2 { flex: 1; }
.bar button { width: 28px; font-size: 14px; line-height: 16px; }
.bar .collapse { width: 20px; padding-left: 2px; font-size: 6px; }
.tree {
  flex: 1;
  min-height: 0;
  list-style: none;
  padding: 3px 0 24px;
  display: flex;
  flex-direction: column;
  background: linear-gradient(#e3e3e3, #e3e3e3) 0 6px / 4px 316px no-repeat;
}
.tree li { flex: 1; min-height: 0; display: flex; align-items: center; padding-left: 26px; }
.tree li.root { padding-left: 11px; font-weight: 700; }
.tree .node { display: flex; align-items: center; height: 17px; background: #f6f6f6; margin-left: 10px; padding-right: 8px; white-space: nowrap; }
.tree .node > svg + svg { margin-left: 7px; }
.tree .node span { padding-left: 12px; }
.tree .root .node { background: none; padding: 0; }
.root .tag { display: flex; align-items: center; height: 17px; background: #d9d9d9; margin-left: 4px; padding: 0 8px 0 3px; }
.root input { appearance: none; width: 11px; height: 11px; margin: 0 0 0 4px; border: 1px solid #999; border-radius: 50%; background: radial-gradient(#444 0 2px, #e8ecfa 3px); }

.navbar { position: absolute; bottom: 5px; left: 499px; height: 20px; display: flex; align-items: center; gap: 6px; background: #f5f5f5; padding: 0 1px; }
.navbar button { gap: 3px; }
.navbar .caret { border-width: 3px 2px 0; }

.timeline { height: 29px; flex: none; background: #f1f1f1; position: relative; overflow: hidden; }
.scrollbar { width: 210px; height: 4px; margin-top: 4px; background: #dadada; }
.track { display: flex; align-items: flex-start; padding: 7px 6px 0 2px; }
.transport { width: 114px; flex: none; display: flex; gap: 9px; padding-top: 5px; }
.features { flex: 1; min-width: 0; display: flex; justify-content: space-between; }
.settings { margin-left: 22px; padding-top: 5px; }
.dock { position: absolute; left: 210px; bottom: 0; }
```

FILE: app.js
```js
const use = (id, w, h) => `<svg width="${w}" height="${h}"><use href="#${id}"/></svg>`;

/* Browser tree: [label, icon, eye state] */
const nodes = [
  ["Document Settings", "gear", ""],
  ["Named Views", "folder", ""],
  ["Origin", "folder", "eyeoff"],
  ["Bodies", "folder", "eye"],
  ["Sketches", "folder", "eyeoff"],
  ["SOIC-20_7.5x12.8mm_P1.27mr...", "complink", "eyeoff"],
  ["PinHeader_2x04_P2.54mm_Ve...", "body", "eyeoff"],
  ["Resistor-1206:1", "comp", "eyeoff"],
  ["Resistor-1206:2", "comp", "eyeoff"],
  ["Resistor-1206:3", "comp", "eyeoff"],
  ["Resistor-1206:4", "comp", "eyeoff"],
  ["Resistor-1206:5", "comp", "eyeoff"],
  ["Resistor-1206:6", "comp", "eyeoff"],
  ["Capacitor-1206:1", "comp", "eyeoff"],
  ["Resistor-1206:7", "comp", "eyeoff"],
  ["Header_SMD_01x06_P2.54mn...", "comp", "eyeoff"],
  ["Capacitor-1206:2", "comp", "eyeoff"],
  ["Resistor-1206:8", "comp", "eyeoff"],
  ["Resistor-1206:9", "comp", "eyeoff"],
  ["Resistor-1206:10", "comp", "eyeoff"],
  ["Output week_copper:1", "body", "eyeoff"],
];
const height = { folder: 12, gear: 14, comp: 14, complink: 14, body: 14 };
document.getElementById("tree").innerHTML =
  `<li class="root"><button aria-label="Collapse">${use("chevdown", 8, 8)}</button>
    <div class="node">${use("eye", 14, 12)}<div class="tag">${use("comp", 14, 14)}<span>PCB_cover0</span></div>
    <input type="radio" checked aria-label="Activate PCB_cover0"></div></li>` +
  nodes.map(([label, icon, eye]) =>
    `<li><button aria-label="Expand ${label}">${use("chev", 8, 8)}</button><div class="node">` +
    (eye ? use(eye, 14, 12) : "") + use(icon, 14, height[icon]) + `<span>${label}</span></div></li>`
  ).join("");

/* Timeline features: e = extrude, b = body */
document.getElementById("features").innerHTML =
  [..."eeebeeeeeeeeeeeebebeebebebebeeeeeeebebebeeebebeeeeeb"]
    .map(k => use(k === "e" ? "tl-extrude" : "tl-body", 14, 14)).join("");

/* Ground grid in two-point perspective */
const left = [-680, -398], right = [2273, -576], origin = [600, 330];
function fan(from, toward, weight, lo, hi) {
  const out = { minor: "", major: "" };
  for (let i = lo; i <= hi; i++) {
    const k = i * weight, d = 1 + k;
    if (d <= 0.15) continue;
    const x = (origin[0] + k * toward[0]) / d, y = (origin[1] + k * toward[1]) / d;
    const ex = from[0] + (x - from[0]) * 4, ey = from[1] + (y - from[1]) * 4;
    out[i % 5 ? "minor" : "major"] += `M${from[0]} ${from[1]}L${ex.toFixed(1)} ${ey.toFixed(1)}`;
  }
  return out;
}
const a = fan(left, right, 0.0085, -60, 90), b = fan(right, left, 0.011, -60, 90);
document.getElementById("grid-minor").setAttribute("d", a.minor + b.minor);
document.getElementById("grid-major").setAttribute("d", a.major + b.major);
```
